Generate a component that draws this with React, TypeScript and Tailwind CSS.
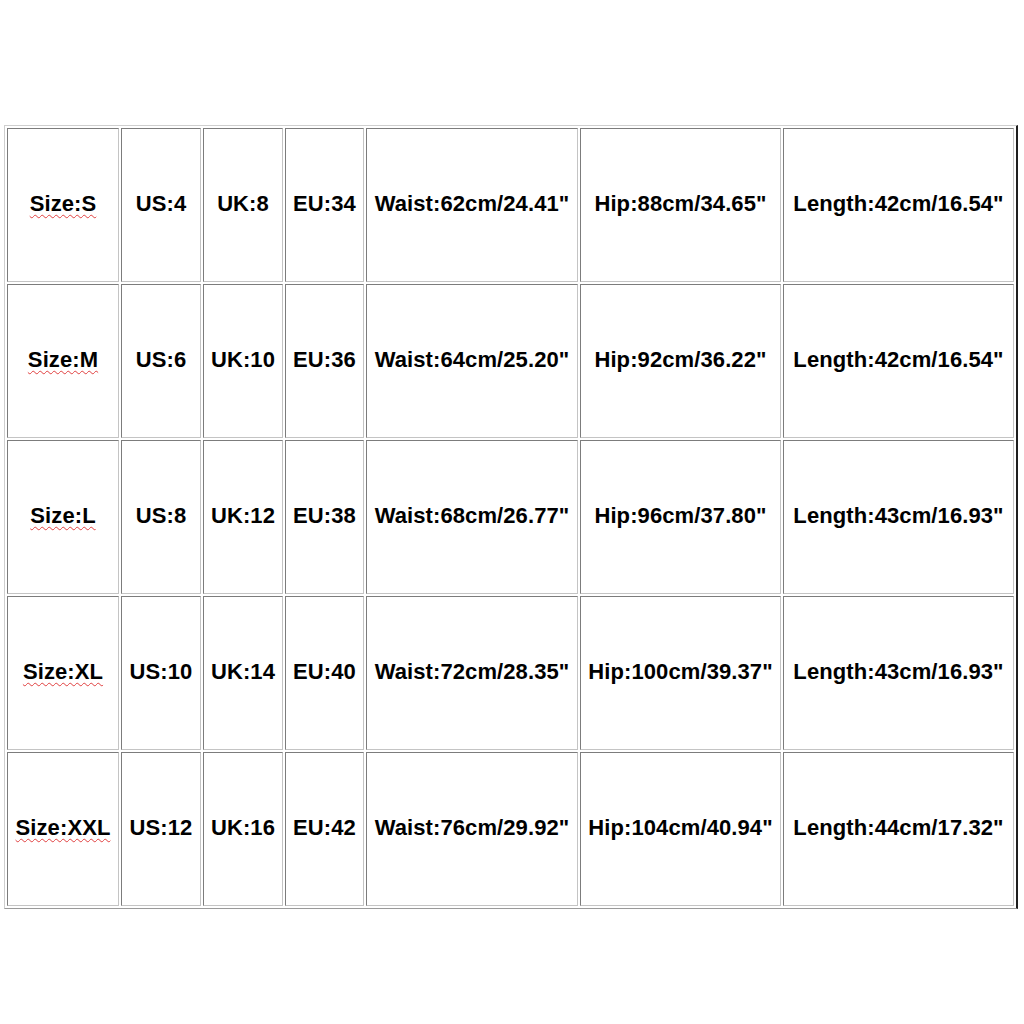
const rows = [
  ["Size:S", "US:4", "UK:8", "EU:34", 'Waist:62cm/24.41"', 'Hip:88cm/34.65"', 'Length:42cm/16.54"'],
  ["Size:M", "US:6", "UK:10", "EU:36", 'Waist:64cm/25.20"', 'Hip:92cm/36.22"', 'Length:42cm/16.54"'],
  ["Size:L", "US:8", "UK:12", "EU:38", 'Waist:68cm/26.77"', 'Hip:96cm/37.80"', 'Length:43cm/16.93"'],
  ["Size:XL", "US:10", "UK:14", "EU:40", 'Waist:72cm/28.35"', 'Hip:100cm/39.37"', 'Length:43cm/16.93"'],
  ["Size:XXL", "US:12", "UK:16", "EU:42", 'Waist:76cm/29.92"', 'Hip:104cm/40.94"', 'Length:44cm/17.32"'],
];

export default function App() {
  return (
    <div className="w-[1024px] h-[1024px] bg-white pt-[125px] pl-[4px] font-['Liberation_Sans',Arial,sans-serif]">
      <div className="inline-block border-l border-t border-b border-r-2 border-l-[#cfcfcf] border-t-[#cfcfcf] border-b-[#9a9a9a] border-r-[#1e1e1e] p-[2px]">
        <div className="grid grid-cols-[112px_80px_80px_79px_212px_201px_231px] auto-rows-[154px] gap-[2px]">
          {rows.map((row, r) =>
            row.map((cell, c) => (
              <div
                key={`${r}-${c}`}
                className="flex items-center justify-center pb-[3px] border border-t-[#7c7c7c] border-l-[#7c7c7c] border-b-[#c4c4c4] border-r-[#c4c4c4] text-[22px] tracking-[0.1px] font-bold text-black whitespace-nowrap"
              >
                {c === 0 ? (
                  <span className="underline decoration-wavy decoration-[#e04040] decoration-1 underline-offset-[3px]">
                    {cell}
                  </span>
                ) : (
                  cell
                )}
              </div>
            ))
          )}
        </div>
      </div>
    </div>
  );
}
